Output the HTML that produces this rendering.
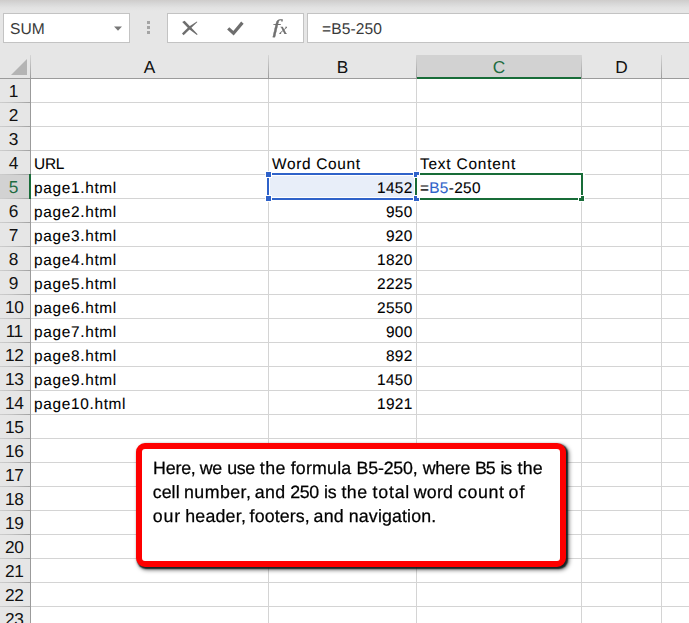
<!DOCTYPE html>
<html>
<head>
<meta charset="utf-8">
<title>Excel</title>
<style>
html,body{margin:0;padding:0;}
body{width:689px;height:623px;overflow:hidden;background:#fff;font-family:"Liberation Sans","DejaVu Sans",sans-serif;position:relative;color:#000;text-rendering:geometricPrecision;}
.a{position:absolute;}
#top{left:0;top:0;width:689px;height:78px;background:#e6e6e6;}
#topgrad{left:0;top:0;width:689px;height:11px;background:linear-gradient(#cecccb 0%,#d8d8d8 35%,#e2e2e2 70%,#e6e6e6 100%);}
.box{background:#fff;border:1px solid #c3c3c3;box-sizing:border-box;}
#namebox{left:3px;top:13px;width:127px;height:30px;}
#btnbox{left:167px;top:13px;width:137px;height:30px;}
#fbox{left:307px;top:13px;width:390px;height:30px;}
.t{position:absolute;white-space:nowrap;font-size:15.6px;letter-spacing:0.1px;line-height:24px;color:#3a3a3a;}
#rowhdr{left:0;top:78px;width:30px;height:545px;background:#e6e6e6;}
.hl{position:absolute;background:#d4d4d4;height:1px;left:31px;width:658px;}
.rl{position:absolute;background:linear-gradient(to right,#cdcdcd 0%,#c2c2c2 40%,#a2a2a2 100%);height:1px;left:0;width:30px;}
.vl{position:absolute;background:#d4d4d4;width:1px;top:79px;height:544px;}
.hv{position:absolute;width:1px;top:55px;height:24px;background:linear-gradient(#d6d6d6,#9a9a9a);}
.rn{position:absolute;left:0;text-align:center;font-size:17.3px;line-height:24px;color:#111;}
.ch{position:absolute;top:55px;height:24px;line-height:24px;text-align:center;font-size:17.3px;color:#111;}
.c{position:absolute;white-space:nowrap;font-size:15.4px;-webkit-text-stroke:0.1px #000;letter-spacing:0.68px;line-height:24px;color:#000;}
.n{letter-spacing:0.3px;}
.r{text-align:right;}
.bl{position:absolute;background:#2f62c9;}
.gr{position:absolute;background:#186c38;}
.w{position:absolute;background:#fff;}
.ct span{position:absolute;top:0;white-space:nowrap;}
.ct{position:absolute;left:0;width:689px;height:24px;white-space:nowrap;font-size:17.8px;line-height:24px;color:#000;will-change:transform;-webkit-text-stroke:0.25px #000;}
</style>
</head>
<body>
<div class="a" id="top"></div>
<div class="a" id="topgrad"></div>
<div class="a box" id="namebox"><span class="t" style="left:6px;top:4px">SUM</span>
<svg class="a" style="left:109px;top:11px" width="10" height="7"><polygon points="1,1.5 9,1.5 5,5.8" fill="#777"/></svg></div>
<svg class="a" style="left:146px;top:20px" width="6" height="18"><rect x="1" y="1" width="3" height="3" fill="#a4a4a4"/><rect x="1" y="6" width="3" height="3" fill="#a4a4a4"/><rect x="1" y="11" width="3" height="3" fill="#a4a4a4"/></svg>
<div class="a box" id="btnbox"></div>
<svg class="a" style="left:167px;top:13px;will-change:transform" width="137" height="30" viewBox="167 13 137 30">
<polygon points="182.2,22 184.6,20.8 190.2,26.6 197.6,34.2 196.9,34.9 189.2,29.2" fill="#6e6e6e"/>
<polygon points="182,33.4 183.6,35.2 190.6,28.6 197.4,22 196.8,21.4 188.8,26.8" fill="#6e6e6e"/>
<path d="M228.2 28.4 L233.5 33.2 L242.4 22.6" stroke="#6e6e6e" stroke-width="3.2" fill="none"/>
<text transform="translate(272.4 32.8) scale(1.3 0.97)" x="0" y="0" font-family="Liberation Serif,serif" font-style="italic" font-size="20" fill="#707070" stroke="#707070" stroke-width="0.3">f</text>
<text x="279.4" y="33.6" font-family="Liberation Serif,serif" font-style="italic" font-size="16" fill="#707070" font-weight="bold">x</text>
</svg>
<div class="a box" id="fbox"><span class="t" style="left:14px;top:4px">=B5-250</span></div>
<div class="a" id="rowhdr"></div>

<div class="a" style="left:417px;top:55px;width:164px;height:22px;background:#d2d2d2"></div>
<div class="a" style="left:0;top:175px;width:30px;height:23px;background:#d2d2d2"></div>
<div class="a" style="left:0;top:78px;width:689px;height:1px;background:#9b9b9b"></div>
<div class="a" style="left:416px;top:77px;width:166px;height:2px;background:#186c38"></div>
<div class="hv" style="left:30px"></div>
<div class="hv" style="left:268px"></div>
<div class="hv" style="left:416px"></div>
<div class="hv" style="left:581px"></div>
<div class="hv" style="left:661px"></div>
<div class="a" style="left:30px;top:79px;width:1px;height:544px;background:#9b9b9b"></div>
<div class="hl" style="top:102px"></div>
<div class="rl" style="top:102px"></div>
<div class="hl" style="top:126px"></div>
<div class="rl" style="top:126px"></div>
<div class="hl" style="top:150px"></div>
<div class="rl" style="top:150px"></div>
<div class="hl" style="top:174px"></div>
<div class="rl" style="top:174px"></div>
<div class="hl" style="top:198px"></div>
<div class="rl" style="top:198px"></div>
<div class="hl" style="top:222px"></div>
<div class="rl" style="top:222px"></div>
<div class="hl" style="top:246px"></div>
<div class="rl" style="top:246px"></div>
<div class="hl" style="top:270px"></div>
<div class="rl" style="top:270px"></div>
<div class="hl" style="top:294px"></div>
<div class="rl" style="top:294px"></div>
<div class="hl" style="top:318px"></div>
<div class="rl" style="top:318px"></div>
<div class="hl" style="top:342px"></div>
<div class="rl" style="top:342px"></div>
<div class="hl" style="top:366px"></div>
<div class="rl" style="top:366px"></div>
<div class="hl" style="top:390px"></div>
<div class="rl" style="top:390px"></div>
<div class="hl" style="top:414px"></div>
<div class="rl" style="top:414px"></div>
<div class="hl" style="top:438px"></div>
<div class="rl" style="top:438px"></div>
<div class="hl" style="top:462px"></div>
<div class="rl" style="top:462px"></div>
<div class="hl" style="top:486px"></div>
<div class="rl" style="top:486px"></div>
<div class="hl" style="top:510px"></div>
<div class="rl" style="top:510px"></div>
<div class="hl" style="top:534px"></div>
<div class="rl" style="top:534px"></div>
<div class="hl" style="top:558px"></div>
<div class="rl" style="top:558px"></div>
<div class="hl" style="top:582px"></div>
<div class="rl" style="top:582px"></div>
<div class="hl" style="top:606px"></div>
<div class="rl" style="top:606px"></div>
<div class="hl" style="top:630px"></div>
<div class="rl" style="top:630px"></div>
<div class="vl" style="left:268px"></div>
<div class="vl" style="left:416px"></div>
<div class="vl" style="left:581px"></div>
<div class="vl" style="left:661px"></div>
<div class="a" style="left:29px;top:174px;width:2px;height:25px;background:#186c38"></div>
<div class="ch" style="left:31px;width:237px;color:#111">A</div>
<div class="ch" style="left:269px;width:147px;color:#111">B</div>
<div class="ch" style="left:417px;width:164px;color:#1e6b41">C</div>
<div class="ch" style="left:582px;width:79px;color:#111">D</div>
<div class="rn" style="top:79px;width:27px;color:#111">1</div>
<div class="rn" style="top:103px;width:27px;color:#111">2</div>
<div class="rn" style="top:127px;width:27px;color:#111">3</div>
<div class="rn" style="top:151px;width:27px;color:#111">4</div>
<div class="rn" style="top:175px;width:27px;color:#1e6b41">5</div>
<div class="rn" style="top:199px;width:27px;color:#111">6</div>
<div class="rn" style="top:223px;width:27px;color:#111">7</div>
<div class="rn" style="top:247px;width:27px;color:#111">8</div>
<div class="rn" style="top:271px;width:27px;color:#111">9</div>
<div class="rn" style="top:295px;width:28.5px;letter-spacing:-0.4px;color:#111">10</div>
<div class="rn" style="top:319px;width:28.5px;letter-spacing:-0.4px;color:#111">11</div>
<div class="rn" style="top:343px;width:28.5px;letter-spacing:-0.4px;color:#111">12</div>
<div class="rn" style="top:367px;width:28.5px;letter-spacing:-0.4px;color:#111">13</div>
<div class="rn" style="top:391px;width:28.5px;letter-spacing:-0.4px;color:#111">14</div>
<div class="rn" style="top:415px;width:28.5px;letter-spacing:-0.4px;color:#111">15</div>
<div class="rn" style="top:439px;width:28.5px;letter-spacing:-0.4px;color:#111">16</div>
<div class="rn" style="top:463px;width:28.5px;letter-spacing:-0.4px;color:#111">17</div>
<div class="rn" style="top:487px;width:28.5px;letter-spacing:-0.4px;color:#111">18</div>
<div class="rn" style="top:511px;width:28.5px;letter-spacing:-0.4px;color:#111">19</div>
<div class="rn" style="top:535px;width:28.5px;letter-spacing:-0.4px;color:#111">20</div>
<div class="rn" style="top:559px;width:28.5px;letter-spacing:-0.4px;color:#111">21</div>
<div class="rn" style="top:583px;width:28.5px;letter-spacing:-0.4px;color:#111">22</div>
<div class="rn" style="top:607px;width:28.5px;letter-spacing:-0.4px;color:#111">23</div>
<svg class="a" style="left:10px;top:58px" width="18" height="18"><polygon points="17,1 17,17 1,17" fill="#b4b4b4"/></svg>
<div class="c" style="left:34px;top:153px;letter-spacing:-0.2px">URL</div>
<div class="c" style="left:272px;top:153px">Word Count</div>
<div class="c" style="left:420px;top:153px;letter-spacing:0.8px">Text Content</div>
<div class="w" style="left:265px;top:171px;width:320px;height:31px"></div>
<div class="a" style="left:270px;top:176px;width:144px;height:21px;background:#e8eef9"></div>
<div class="c" style="left:34px;top:177px">page1.html</div>
<div class="c r n" style="left:269px;width:143.5px;top:177px">1452</div>
<div class="c" style="left:34px;top:201px">page2.html</div>
<div class="c r n" style="left:269px;width:143.5px;top:201px">950</div>
<div class="c" style="left:34px;top:225px">page3.html</div>
<div class="c r n" style="left:269px;width:143.5px;top:225px">920</div>
<div class="c" style="left:34px;top:249px">page4.html</div>
<div class="c r n" style="left:269px;width:143.5px;top:249px">1820</div>
<div class="c" style="left:34px;top:273px">page5.html</div>
<div class="c r n" style="left:269px;width:143.5px;top:273px">2225</div>
<div class="c" style="left:34px;top:297px">page6.html</div>
<div class="c r n" style="left:269px;width:143.5px;top:297px">2550</div>
<div class="c" style="left:34px;top:321px">page7.html</div>
<div class="c r n" style="left:269px;width:143.5px;top:321px">900</div>
<div class="c" style="left:34px;top:345px">page8.html</div>
<div class="c r n" style="left:269px;width:143.5px;top:345px">892</div>
<div class="c" style="left:34px;top:369px">page9.html</div>
<div class="c r n" style="left:269px;width:143.5px;top:369px">1450</div>
<div class="c" style="left:34px;top:393px">page10.html</div>
<div class="c r n" style="left:269px;width:143.5px;top:393px">1921</div>
<div class="c n" style="left:420px;top:177px">=<span style="color:#2f62c9;-webkit-text-stroke-color:#2f62c9">B5</span>-250</div>
<div class="bl" style="left:272px;top:173px;width:141px;height:2px"></div>
<div class="bl" style="left:272px;top:198px;width:141px;height:2px"></div>
<div class="bl" style="left:267px;top:178px;width:2px;height:17px"></div>
<div class="w" style="left:265px;top:171px;width:7px;height:7px"></div>
<div class="bl" style="left:266px;top:172px;width:5px;height:5px"></div>
<div class="w" style="left:413px;top:171px;width:7px;height:7px"></div>
<div class="bl" style="left:414px;top:172px;width:5px;height:5px"></div>
<div class="w" style="left:265px;top:195px;width:7px;height:7px"></div>
<div class="bl" style="left:266px;top:196px;width:5px;height:5px"></div>
<div class="w" style="left:413px;top:195px;width:7px;height:7px"></div>
<div class="bl" style="left:414px;top:196px;width:5px;height:5px"></div>
<div class="w" style="left:417px;top:175px;width:2px;height:2px"></div>
<div class="w" style="left:417px;top:196px;width:2px;height:2px"></div>
<div class="gr" style="left:415px;top:178px;width:2px;height:17px"></div>
<div class="gr" style="left:420px;top:173px;width:163px;height:2px"></div>
<div class="gr" style="left:581px;top:173px;width:2px;height:22px"></div>
<div class="gr" style="left:420px;top:198px;width:158px;height:2px"></div>
<div class="gr" style="left:579px;top:198px;width:5px;height:3px"></div>
<div class="gr" style="left:581px;top:196px;width:3px;height:2px"></div>
<div class="a" style="left:136px;top:443px;width:430px;height:124px;box-sizing:border-box;border:6px solid #fe0000;border-radius:9px;background:#fff;box-shadow:1.5px 1.5px 1.5px rgba(10,25,25,.9),2.5px 2.5px 4px rgba(0,0,0,.55);"></div>

<div class="ct" style="top:456px"><span style="left:153.1px;letter-spacing:-0.2px">Here,</span> <span style="left:199.8px;letter-spacing:-0.3px">we</span> <span style="left:227.3px;letter-spacing:-0.4px">use</span> <span style="left:259.8px;letter-spacing:0.4px">the</span> <span style="left:290.7px;letter-spacing:0.2px">formula</span> <span style="left:356.6px;letter-spacing:-0.2px">B5-250,</span> <span style="left:422.7px;letter-spacing:-0.2px">where</span> <span style="left:475.0px;letter-spacing:-1.2px">B5</span> <span style="left:500.4px;letter-spacing:-1.0px">is</span> <span style="left:517.6px;letter-spacing:0.2px">the</span></div>
<div class="ct" style="top:480px"><span style="left:152.7px;letter-spacing:0.07px">cell</span> <span style="left:184.0px;letter-spacing:0.43px">number,</span> <span style="left:254.7px;letter-spacing:0.45px">and</span> <span style="left:290.2px;letter-spacing:-0.3px">250</span> <span style="left:324.1px;letter-spacing:-0.2px">is</span> <span style="left:341.4px;letter-spacing:0.5px">the</span> <span style="left:372.5px;letter-spacing:0.8px">total</span> <span style="left:413.8px;letter-spacing:0.2px">word</span> <span style="left:458.1px;letter-spacing:0.58px">count</span> <span style="left:508.5px;letter-spacing:1.1px">of</span></div>
<div class="ct" style="top:504px"><span style="left:152.7px;letter-spacing:0.9px">our</span> <span style="left:185.2px;letter-spacing:0.22px">header,</span> <span style="left:249.6px;letter-spacing:0.13px">footers,</span> <span style="left:313.6px;letter-spacing:0.25px">and</span> <span style="left:348.8px;letter-spacing:0.14px">navigation.</span></div>

</body>
</html>
